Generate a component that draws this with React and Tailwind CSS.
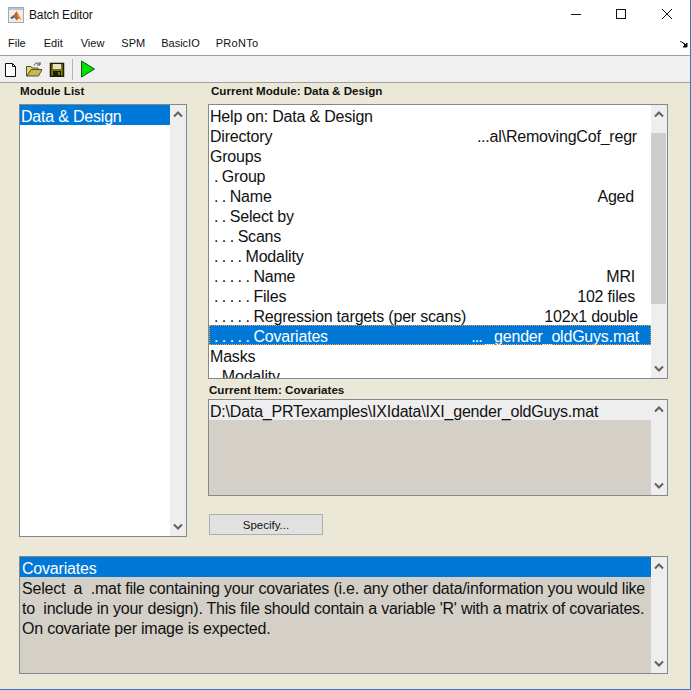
const rows = [
  ['', 'Help on: Data & Design', ''],
  ['', 'Directory', '...al\\RemovingCof_regr', 'pr-[14px]'],
  ['', 'Groups', ''],
  [' . ', 'Group', ''],
  [' . . ', 'Name', 'Aged', 'pr-[17px]'],
  [' . . ', 'Select by', ''],
  [' . . . ', 'Scans', ''],
  [' . . . . ', 'Modality', ''],
  [' . . . . . ', 'Name', 'MRI', 'pr-[16px]'],
  [' . . . . . ', 'Files', '102 files', 'pr-[16px]'],
  [' . . . . . ', 'Regression targets (per scans)', '102x1 double', 'pr-[13px]'],
  [' . . . . . ', 'Covariates', <><span className="tracking-[-0.9px]">... </span>_gender_oldGuys.mat</>, 'pr-[12px]', true],
  ['', 'Masks', ''],
  [' . ', 'Modality', ''],
]

function Chevron({ down }) {
  return (
    <svg width="10" height="7" viewBox="0 0 10 7" className="block">
      <path d={down ? 'M1 1.5 L5 5.5 L9 1.5' : 'M1 5.5 L5 1.5 L9 5.5'} fill="none" stroke="#606060" strokeWidth="2" />
    </svg>
  )
}

function Scrollbar({ thumbTop, thumbHeight }) {
  return (
    <div className="relative w-[16px] shrink-0 bg-[#eeeeee] flex flex-col items-center justify-between py-[6px]">
      <Chevron />
      {thumbHeight ? (
        <div className="absolute left-0 w-[15px] bg-[#cdcdcd]" style={{ top: thumbTop, height: thumbHeight }} />
      ) : null}
      <Chevron down />
    </div>
  )
}

function AppIcon() {
  return (
    <svg width="16" height="16" viewBox="0 0 16 16" className="block">
      <rect x="0.5" y="0.5" width="15" height="15" fill="#eeeeee" stroke="#a8a8a8" />
      <rect x="1" y="1" width="14" height="2" fill="#b8c4d0" />
      <path d="M2 11 L6 8 L8.5 4 L13.5 13 L11 11 L8.5 13.5 L6.5 10.5 Z" fill="#d9531e" />
      <path d="M2 11 L6 8 L6.5 10.5 L4.5 12 Z" fill="#2f75b8" />
      <path d="M8.5 4 L9.5 9.5 L13.5 13 Z" fill="#f0a030" />
    </svg>
  )
}

export default function App() {
  return (
    <div className="w-[691px] h-[690px] flex flex-col bg-[#ebe8d8] border-r border-b border-[#2a7ac4] overflow-hidden font-['Liberation_Sans',Arial,sans-serif] text-black">
      <div className="h-[33px] bg-white flex items-center shrink-0 relative pl-[8px] pb-[3px]">
        <AppIcon />
        <span className="ml-[5px] text-[12px] text-[#111] tracking-[-0.15px]">Batch Editor</span>
        <div className="absolute right-[10px] top-0 h-[30px] flex items-center">
          <svg width="120" height="30" viewBox="0 0 120 30" className="block">
            <path d="M11 14.5 H21" stroke="#111" fill="none" />
            <rect x="56.5" y="9.5" width="9" height="9" stroke="#111" fill="none" />
            <path d="M102 9 L112 19 M112 9 L102 19" stroke="#111" fill="none" />
          </svg>
        </div>
      </div>

      <div className="h-[22px] bg-white shrink-0 flex items-center pl-[8px] pb-[2px] text-[11px] text-[#111] relative">
        <span className="mr-[18px]">File</span>
        <span className="mr-[18px]">Edit</span>
        <span className="mr-[17px]">View</span>
        <span className="mr-[16px]">SPM</span>
        <span className="mr-[16px]">BasicIO</span>
        <span className="tracking-[0.3px]">PRoNTo</span>
        <svg width="8" height="7" viewBox="0 0 8 7" className="absolute right-[2px] top-[8px]">
          <path d="M0 0 L5 3 M2 1 L6 5 M7 2 V6 H3 Z" stroke="#111" fill="#111" />
        </svg>
      </div>

      <div className="h-[28px] shrink-0 bg-[#f0f0f0] border-y border-[#a0a0a0] flex items-center pl-[4px]">
        <svg width="16" height="16" viewBox="0 0 16 16" className="block">
          <path d="M1.5 2.5 H8.5 L11.5 5.5 V15.5 H1.5 Z M8.5 2.5 V5.5 H11.5" fill="#fff" stroke="#111" />
        </svg>
        <svg width="18" height="16" viewBox="0 0 18 16" className="block ml-[6px]">
          <path d="M0.5 5.5 H5 L6 7 H12 V9 H5 L1 15 H0.5 Z" fill="#e8d870" stroke="#555520" />
          <path d="M1 15 L5 8.5 H16 L12.5 15 Z" fill="#c8b850" stroke="#555520" />
          <path d="M8 4.5 C9.5 1.5 12 1.5 13.5 3 M14 1 V4 H11" fill="none" stroke="#444" />
        </svg>
        <svg width="16" height="16" viewBox="0 0 16 16" className="block ml-[5px]">
          <rect x="1.5" y="2.5" width="13" height="13" fill="#77770f" stroke="#1c1c00" strokeWidth="1.5" />
          <rect x="4" y="3" width="8" height="5" fill="#e4e4c0" />
          <rect x="4" y="10" width="8" height="5" fill="#1c1c00" />
          <rect x="9" y="11" width="2" height="3" fill="#77770f" />
        </svg>
        <div className="w-px h-[21px] bg-[#b4b4b4] ml-[7px]" />
        <svg width="16" height="18" viewBox="0 0 16 18" className="block ml-[7px]">
          <path d="M1.5 1 L14.5 9 L1.5 17 Z" fill="#00e000" stroke="#0a5a0a" />
        </svg>
      </div>

      <div className="flex-1 flex flex-col pl-[19px] pr-[22px]">
        <div className="flex h-[454px] shrink-0">
          <div className="w-[168px] shrink-0 flex flex-col">
            <div className="h-[21px] pl-px pt-px text-[11.6px] font-bold leading-[14px] text-[#111]">Module List</div>
            <div className="h-[433px] border border-[#808890] bg-white flex">
              <div className="flex-1 min-w-0">
                <div className="h-[20px] bg-[#0078d7] text-white text-[16px] leading-[24px] tracking-[-0.2px] pl-px whitespace-pre overflow-hidden">Data &amp; Design</div>
              </div>
              <Scrollbar />
            </div>
          </div>

          <div className="ml-[21px] flex-1 min-w-0 flex flex-col">
            <div className="h-[21px] pl-[3px] pt-px text-[11.6px] font-bold leading-[14px] text-[#111]">Current Module: Data &amp; Design</div>
            <div className="h-[275px] border border-[#808890] bg-white flex overflow-hidden">
              <div className="flex-1 min-w-0 overflow-hidden">
                {rows.map(([dots, label, value, pad, selected], i) => (
                  <div
                    key={i}
                    className={selected
                      ? 'h-[20px] flex justify-between overflow-hidden bg-[#0078d7] text-white text-[16px] leading-[24px] tracking-[-0.2px] pl-px whitespace-pre outline-1 outline-dotted outline-[#f0a040] -outline-offset-1 ' + pad
                      : 'h-[20px] flex justify-between overflow-hidden text-[16px] leading-[24px] tracking-[-0.2px] text-[#111] pl-px whitespace-pre ' + (pad || '')}
                  >
                    <span><span className="tracking-[-0.5px]">{dots}</span>{label}</span>
                    <span>{value}</span>
                  </div>
                ))}
              </div>
              <Scrollbar thumbTop={28} thumbHeight={171} />
            </div>
            <div className="h-[20px] pl-px pt-[4px] text-[11.6px] font-bold leading-[14px] text-[#111]">Current Item: Covariates</div>
            <div className="h-[97px] border border-[#808890] bg-[#d4d0c8] flex">
              <div className="flex-1 min-w-0">
                <div className="h-[20px] bg-[#eeeeee] text-[16px] leading-[24px] tracking-[-0.2px] pl-px text-[#111] whitespace-pre">D:\Data_PRTexamples\IXIdata\IXI_gender_oldGuys.mat</div>
              </div>
              <Scrollbar />
            </div>
            <button className="mt-[18px] ml-px w-[114px] h-[21px] bg-[#e1e1e1] border border-[#adadad] text-[11.5px] text-[#111] leading-[18px]">Specify...</button>
          </div>
        </div>

        <div className="mt-[19px] h-[118px] border border-[#808890] bg-[#d4d0c8] flex">
          <div className="flex-1 min-w-0">
            <div className="h-[20px] bg-[#0078d7] text-white text-[16px] leading-[24px] tracking-[-0.2px] pl-[2px] overflow-hidden">Covariates</div>
            <div className="pt-[2px] text-[16px] leading-[20px] tracking-[-0.22px] pl-[2px] text-[#111] whitespace-pre">{"Select  a  .mat file containing your covariates (i.e. any other data/information you would like\nto  include in your design). This file should contain a variable 'R' with a matrix of covariates.\nOn covariate per image is expected."}</div>
          </div>
          <Scrollbar />
        </div>
      </div>
    </div>
  )
}
